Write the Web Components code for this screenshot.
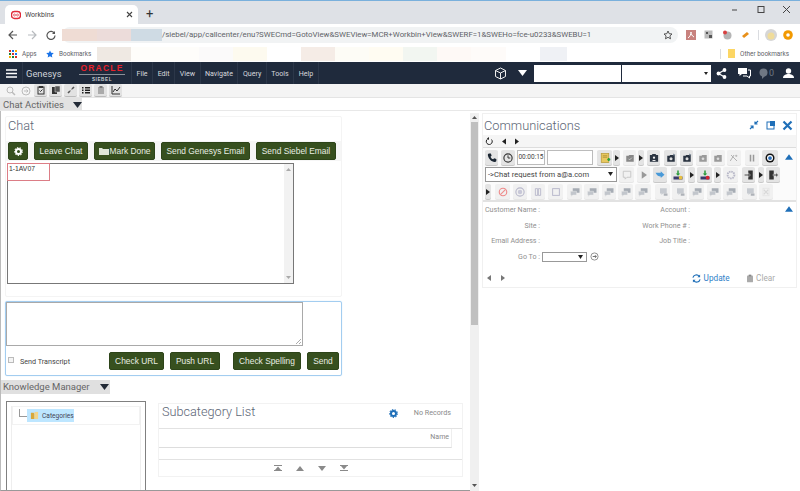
<!DOCTYPE html>
<html>
<head>
<meta charset="utf-8">
<title>Workbins</title>
<style>
  html, body { margin: 0; padding: 0; height: 100%; overflow: hidden; background: #fff; font-family: "Roboto", "Liberation Sans", sans-serif; }
  work-bins { display: flex; flex-direction: column; width: 800px; height: 491px; overflow: hidden; }
</style>
</head>
<body>
<work-bins></work-bins>
<script>
// tiny icon set, all drawn on a 16x16 box
const ICONS = {
  phone: '<path d="M4 2l2.5 0 1 3-1.5 1.2c.6 1.6 2 3 3.6 3.6L10.8 8.300l3 1v2.500c0 1-1 1.700-2 1.500C6.800 12.600 3.300 9 2.500 4.200 2.300 3 3 2 4 2z" fill="#1c2733"/>',
  clock: '<circle cx="8" cy="8" r="5.5" fill="none" stroke="#333" stroke-width="1.5"/><path d="M8 4.500V8h3" fill="none" stroke="#333" stroke-width="1.3"/>',
  note: '<rect x="3" y="2" width="10" height="12" fill="#e8c860" stroke="#b89a3a"/><path d="M5 5h6M5 7h6" stroke="#a88a30"/><path d="M11 10h4M13 8v4" stroke="#2fa03a" stroke-width="2"/>',
  tray: '<path d="M3 5h3l1-1h6v9H3z" fill="#888"/><path d="M6 9l1.5 1.5L10.5 7.5" stroke="#ddd" fill="none"/>',
  card: '<rect x="2.5" y="4" width="11" height="9" fill="#2a3340"/><circle cx="8" cy="7.5" r="1.5" fill="#eee"/><path d="M5.5 12c0-2 5-2 5 0" fill="#eee"/><path d="M5 4l1-1.5h4L11 4" fill="#2a3340"/>',
  folderx: '<path d="M3 5h3l1-1h6v9H3z" fill="#2a3340"/><circle cx="8" cy="9" r="2" fill="#ddd"/><path d="M11 2l3 2-3 1" fill="#6a7a8a"/>',
  folderg: '<path d="M3 5h3l1-1h6v9H3z" fill="#9a9a9a"/><circle cx="8" cy="9" r="1.8" fill="#ddd"/>',
  percent: '<path d="M4 4l8 8M3 12l5-8" stroke="#aaa" stroke-width="1.2" fill="none"/><circle cx="11" cy="5" r="1.5" fill="#bbb"/>',
  pause: '<path d="M5 3.500h2v9H5zM9 3.500h2v9H9z" fill="#999"/>',
  target: '<circle cx="8" cy="8" r="6" fill="#111"/><circle cx="8" cy="8" r="4" fill="#fff"/><circle cx="8" cy="8" r="2.5" fill="#2a6cb5"/>',
  chat: '<path d="M3 3h10v8H8l-2.500 2.500V11H3z" fill="none" stroke="#c4c4c4" stroke-width="1.2"/>',
  play: '<path d="M5 3l7 5-7 5z" fill="#999"/>',
  arrow: '<path d="M2 5h7V3l5 4.500-5 4.500v-2c-3 0-5-1-7-5z" fill="#4a9ad8"/>',
  accept: '<path d="M8 2v5" stroke="#2a9a3a" stroke-width="2"/><path d="M5 6h6L8 9z" fill="#2a9a3a"/><path d="M2 10h12v4H2z" fill="#3a3a6a"/><circle cx="11.5" cy="11.5" r="2.5" fill="#e8c040"/>',
  reject: '<path d="M8 2v5" stroke="#2a9a3a" stroke-width="2"/><path d="M5 6h6L8 9z" fill="#2a9a3a"/><path d="M2 10h12v4H2z" fill="#3a3a6a"/><circle cx="11.5" cy="11.5" r="2.5" fill="#d82030"/>',
  gearg: '<circle cx="8" cy="8" r="4.5" fill="none" stroke="#b8b8c8" stroke-width="2.5" stroke-dasharray="2 1"/>',
  door: '<path d="M7 2h6v12H7z" fill="#333"/><path d="M2 7h5V5l3 3-3 3V9H2z" fill="#555" stroke="#eee" stroke-width=".5"/>',
  doorout: '<path d="M3 2h6v12H3z" fill="#333"/><path d="M8 7h4V5l3 3-3 3V9H8z" fill="#555" stroke="#eee" stroke-width=".5"/>',
  ban: '<circle cx="8" cy="8" r="5" fill="none" stroke="#ee8a8a" stroke-width="1.5"/><path d="M4.500 11.500l7-7" stroke="#ee8a8a" stroke-width="1.5"/>',
  ring: '<circle cx="8" cy="8" r="5.5" fill="none" stroke="#b9b9cc" stroke-width="1.5"/><circle cx="8" cy="8" r="3" fill="#c8c8d8"/>',
  pauseb: '<path d="M4.500 3.500h3v9h-3zM8.500 3.500h3v9h-3z" fill="none" stroke="#b9b9cc" stroke-width="1.2"/>',
  stop: '<rect x="3.5" y="3.5" width="9" height="9" fill="none" stroke="#b9b9cc" stroke-width="1.3"/>',
  msgs: '<path d="M5 3h9v6H8l-2 2V9H5z" fill="#a6acb4"/><path d="M2 7h8v5H5l-2 2v-2H2z" fill="#c2c6cc" stroke="#eee" stroke-width=".6"/>',
  msgl: '<path d="M4 3h9v7H8l-2 2v-2H4z" fill="#c6cad0"/><path d="M9 10h5v3H9z" fill="#aeb2b8"/>',
  x: '<path d="M5 5l6 6M11 5l-6 6" stroke="#d8d8d8" stroke-width="1.5"/><rect x="4" y="3" width="8" height="10" fill="none" stroke="#e2e2e2"/>'
};
const svg = (name, size) => `<svg width="${size}" height="${size}" viewBox="0 0 16 16">${ICONS[name]}</svg>`;

class IconBtn extends HTMLElement {
  connectedCallback() {
    const w = this.getAttribute('w') || 16;
    const dis = this.hasAttribute('off');
    this.attachShadow({ mode: 'open' }).innerHTML = `
      <style>
        :host { display: block; flex: none; }
        div { width: ${w}px; height: 15px; display: flex; align-items: center; justify-content: center;
              border-radius: 2px; background: ${dis ? '#f1f1f1' : '#e4e4e4'}; box-shadow: 0 1px 0 ${dis ? '#e6e6e6' : '#c8c8c8'}; }
      </style>
      <div>${this.getAttribute('i') ? svg(this.getAttribute('i'), 12) : ''}<slot></slot></div>`;
  }
}
customElements.define('icon-btn', IconBtn);

class DarkBtn extends HTMLElement {
  constructor() {
    super();
    this.attachShadow({ mode: 'open' }).innerHTML = `
      <style>
        :host { display: flex; flex: none; align-items: center; justify-content: center; height: 18px; box-sizing: border-box;
                background: #37501f; color: #e9eee4; border: 1px solid #2d4419; border-radius: 2px;
                font: 8.4px "Liberation Sans", sans-serif; white-space: nowrap; }
      </style><slot></slot>`;
  }
}
customElements.define('dark-btn', DarkBtn);

class BrowserChrome extends HTMLElement {
  constructor() {
    super();
    this.attachShadow({ mode: 'open' }).innerHTML = `
      <style>
        :host { display: block; flex: none; font-family: "Roboto", "Liberation Sans", sans-serif; color: #5f6368; }
        .tabs { height: 23px; background: #dee1e6; border-top: 1px solid #79b0dc; display: flex; align-items: flex-end; padding-left: 5px; }
        .tab { width: 133px; height: 19px; box-sizing: border-box; background: #fff; border-radius: 5px 5px 0 0; display: flex; align-items: center; padding: 0 6px 0 6px; font-size: 7px; color: #444; }
        .tab span { flex: 1; margin-left: 4px; }
        .plus { font-size: 13px; color: #333; margin: 0 0 3px 8px; line-height: 14px; }
        .win { margin-left: auto; display: flex; align-items: center; gap: 17px; padding: 0 9px 6px 0; height: 17px; }
        .nav { height: 21px; background: #fff; display: flex; align-items: center; }
        .navbtns { width: 62px; display: flex; gap: 9px; padding-left: 8px; box-sizing: border-box; }
        .url { width: 616px; height: 16px; background: #f1f3f4; border-radius: 8px; display: flex; align-items: center; font-size: 7.83px; white-space: nowrap; position: relative; }
        .blur { display: flex; height: 12px; }
        .blur i { display: block; height: 12px; }
        .ext { display: flex; align-items: center; gap: 8px; margin-left: 8px; }
        .marks { height: 17px; background: #fff; display: flex; align-items: center; font-size: 6.4px; }
        .marks b { font-weight: normal; }
        .blocks { display: flex; height: 14px; margin-left: 6px; width: 623px; flex: none; }
        .blocks i { display: block; height: 14px; }
      </style>
      <div class="tabs">
        <div class="tab">
          <svg width="10" height="10" viewBox="0 0 10 10"><rect x=".5" y="1.5" width="9" height="7" rx="3" fill="none" stroke="#e02a3a" stroke-width="1.4"/><circle cx="3.5" cy="5" r="1" fill="none" stroke="#e02a3a" stroke-width=".7"/><circle cx="6.5" cy="5" r="1" fill="none" stroke="#e02a3a" stroke-width=".7"/></svg>
          <span>Workbins</span>
          <svg width="7" height="7" viewBox="0 0 7 7" style="margin-right:-1px"><path d="M1 1l5 5M6 1L1 6" stroke="#444" stroke-width="1.1"/></svg>
        </div>
        <div class="plus">+</div>
        <div class="win">
          <svg width="9" height="9" viewBox="0 0 9 9"><path d="M2 5h5" stroke="#444"/></svg>
          <svg width="9" height="9" viewBox="0 0 9 9"><rect x="2" y="1.5" width="6" height="6" fill="none" stroke="#444"/></svg>
          <svg width="9" height="9" viewBox="0 0 9 9"><path d="M1 1l7 7M8 1L1 8" stroke="#444"/></svg>
        </div>
      </div>
      <div class="nav">
        <div class="navbtns">
          <svg width="10" height="10" viewBox="0 0 10 10"><path d="M9 5H1.5M5 1L1 5l4 4" fill="none" stroke="#555" stroke-width="1.2"/></svg>
          <svg width="10" height="10" viewBox="0 0 10 10"><path d="M1 5h7.5M5 1l4 4-4 4" fill="none" stroke="#b8bbbf" stroke-width="1.2"/></svg>
          <svg width="10" height="10" viewBox="0 0 10 10"><path d="M8.5 3.5A4 4 0 1 0 9 5.5" fill="none" stroke="#555" stroke-width="1.2"/><path d="M9 1v3H6z" fill="#555"/></svg>
        </div>
        <div class="url">
          <div class="blur"><i style="width:35px;background:#efdcd4"></i><i style="width:34px;background:#ecdcda"></i><i style="width:31px;background:#cfdbe4"></i></div>
          <span>/siebel/app/callcenter/enu?SWECmd=GotoView&amp;SWEView=MCR+Workbin+View&amp;SWERF=1&amp;SWEHo=fce-u0233&amp;SWEBU=1</span>
          <svg style="position:absolute;right:5px;top:3px" width="10" height="10" viewBox="0 0 10 10"><path d="M5 1l1.200 2.700 2.800.3-2.100 1.900.6 2.900L5 7.300 2.500 8.800l.6-2.900L1 4l2.800-.3z" fill="none" stroke="#444" stroke-width=".9"/></svg>
        </div>
        <div class="ext">
          <svg width="10" height="10" viewBox="0 0 10 10"><rect width="10" height="10" fill="#c8827e"/><path d="M2 8c2-1 3-4 3-6 0 2 1 4 3 5" stroke="#fff" fill="none"/></svg>
          <svg width="10" height="10" viewBox="0 0 10 10"><rect x=".5" y=".5" width="8" height="8" fill="#bcbcbc"/><path d="M2 2h2v2H2zM5 5h3v3H5z" fill="#555"/></svg>
          <svg width="10" height="10" viewBox="0 0 10 10"><circle cx="5.5" cy="5.5" r="4" fill="#b5b5b5"/><circle cx="3" cy="2.5" r="2" fill="#d84040"/></svg>
          <svg width="10" height="10" viewBox="0 0 10 10"><path d="M2 6l5-4 2 2-5 4z" fill="#e8901a"/></svg>
          <i style="display:block;width:1px;height:10px;background:#dadce0"></i>
          <svg width="12" height="12" viewBox="0 0 12 12" style="margin-left:-2px"><circle cx="6" cy="6" r="6" fill="#d6d6d6"/><circle cx="6" cy="7" r="3.5" fill="#f0dc9a"/></svg>
          <svg width="10" height="10" viewBox="0 0 10 10" style="margin-left:-2px"><circle cx="5" cy="5" r="4.8" fill="#f29900"/><circle cx="5" cy="5" r="1.8" fill="#fff"/></svg>
        </div>
      </div>
      <div class="marks">
        <svg style="margin-left:9px" width="8" height="8" viewBox="0 0 8 8"><rect width="2" height="2" fill="#d93025"/><rect x="3" width="2" height="2" fill="#1a73e8"/><rect x="6" width="2" height="2" fill="#f9ab00"/><rect y="3" width="2" height="2" fill="#188038"/><rect x="3" y="3" width="2" height="2" fill="#d93025"/><rect x="6" y="3" width="2" height="2" fill="#1a73e8"/><rect y="6" width="2" height="2" fill="#f9ab00"/><rect x="3" y="6" width="2" height="2" fill="#188038"/><rect x="6" y="6" width="2" height="2" fill="#d93025"/></svg>
        <b style="margin-left:5px;width:14px">Apps</b>
        <svg style="margin-left:10px" width="8" height="8" viewBox="0 0 10 10"><path d="M5 .5l1.400 3 3.300.4-2.400 2.200.6 3.300L5 7.800 2.100 9.400l.6-3.300L.3 3.900l3.300-.4z" fill="#1a73e8"/></svg>
        <b style="margin-left:5px;width:32px">Bookmarks</b>
        <div class="blocks">
          <i style="width:34px;background:#efe9e3"></i><i style="width:68px;background:#fefdfa"></i><i style="width:34px;background:#fbfafa"></i><i style="width:34px;background:#fdfaef"></i><i style="width:34px"></i><i style="width:34px;background:#f5ece6"></i><i style="width:34px;background:#fdfcf6"></i><i style="width:34px;background:#fffcf2"></i><i style="width:34px;background:#f2f6f1"></i><i style="width:34px;background:#fef9f6"></i><i style="width:35px;background:#fefbf9"></i><i style="width:34px"></i><i style="width:27px;background:#eff1f5"></i>
        </div>
        <i style="display:block;width:1px;height:10px;background:#dadce0"></i>
        <svg style="margin-left:7px" width="7" height="9" viewBox="0 0 7 9"><path d="M0 0h7v9H0z" fill="#fcd664"/></svg>
        <b style="margin-left:5px;white-space:nowrap">Other bookmarks</b>
      </div>`;
  }
}
customElements.define('browser-chrome', BrowserChrome);

class SiebelHeader extends HTMLElement {
  constructor() {
    super();
    this.attachShadow({ mode: 'open' }).innerHTML = `
      <style>
        :host { display: flex; flex: none; height: 22px; background: #1f2a3c; color: #d5d8dd; align-items: stretch; font: 7.1px "Roboto", "Liberation Sans", sans-serif; }
        .cell { display: flex; align-items: center; box-sizing: border-box; border-right: 1px solid #2c3749; }
        .burger { width: 23px; justify-content: center; }
        .genesys { width: 109px; padding-left: 3px; font-size: 9.4px; position: relative; color: #cfd3d9; }
        .logo { position: absolute; left: 56px; top: 2px; width: 46px; text-align: center; }
        .logo b { display: block; font: bold 8.5px/8px "Liberation Sans", sans-serif; letter-spacing: 1.2px; color: #e8212b; border-bottom: 1px solid #8a8f98; padding-bottom: 2px; }
        .logo span { display: block; font: bold 4.6px/10px "Liberation Sans", sans-serif; letter-spacing: .6px; color: #c8ccd2; }
        .menu { padding: 0 4.5px; }
        .spacer { flex: 1; }
        .box { height: 17px; align-self: center; background: #fff; flex: none; position: relative; }
        .right { display: flex; align-items: center; }
      </style>
      <div class="cell burger"><svg width="11" height="9" viewBox="0 0 11 9"><path d="M0 1h11M0 4.500h11M0 8h11" stroke="#fff" stroke-width="1.5"/></svg></div>
      <div class="cell genesys">Genesys<div class="logo"><b>ORACLE</b><span>SIEBEL</span></div></div>
      <div class="cell menu">File</div><div class="cell menu">Edit</div><div class="cell menu">View</div><div class="cell menu">Navigate</div><div class="cell menu">Query</div><div class="cell menu">Tools</div><div class="cell menu">Help</div>
      <div class="spacer"></div>
      <div class="right">
        <svg width="13" height="13" viewBox="0 0 13 13" style="margin-right:11px"><path d="M6.500 1l5 2.500v6l-5 2.500-5-2.500v-6zM1.500 3.500l5 2.500 5-2.500M6.500 6v6" fill="none" stroke="#eee"/></svg>
        <svg width="9" height="6" viewBox="0 0 9 6" style="margin-right:7px"><path d="M0 0h9L4.500 6z" fill="#fff"/></svg>
        <div class="box" style="width:87px;margin-right:1px"></div>
        <div class="box" style="width:89px"><svg style="position:absolute;right:3px;top:7px" width="4" height="3" viewBox="0 0 4 3"><path d="M0 0h4L2 3z" fill="#222"/></svg></div>
        <svg width="11" height="11" viewBox="0 0 11 11" style="margin-left:5px"><path d="M8.500 2L2.500 5.500l6 3.500" fill="none" stroke="#fff" stroke-width="1.2"/><circle cx="8.5" cy="2" r="1.9" fill="#fff"/><circle cx="2.5" cy="5.5" r="1.9" fill="#fff"/><circle cx="8.5" cy="9" r="1.9" fill="#fff"/></svg>
        <svg width="14" height="12" viewBox="0 0 14 12" style="margin-left:10px"><path d="M1 1h9v6H5L2.500 9V7H1z" fill="#fff"/><path d="M11 3h2.500v6h-1v2L10 9H6" fill="none" stroke="#fff"/></svg>
        <svg width="9" height="11" viewBox="0 0 9 11" style="margin-left:8px"><ellipse cx="4.5" cy="4.5" rx="4" ry="4" fill="#6f7783"/><path d="M3 8l0 3 3-3z" fill="#6f7783"/></svg>
        <span style="font-size:9px;color:#6f7783;margin-left:1px">0</span>
        <svg width="11" height="10" viewBox="0 0 11 10" style="margin:0 6px 0 9px"><circle cx="5.5" cy="3" r="2.7" fill="#fff"/><path d="M0 10c0-3 3-4 5.500-4s5.500 1 5.500 4z" fill="#fff"/></svg>
      </div>`;
  }
}
customElements.define('siebel-header', SiebelHeader);

class ViewBar extends HTMLElement {
  constructor() {
    super();
    const btn = (d, off) => `<span class="b${off ? ' off' : ''}"><svg width="10" height="10" viewBox="0 0 10 10">${d}</svg></span>`;
    this.attachShadow({ mode: 'open' }).innerHTML = `
      <style>
        :host { display: block; flex: none; font-family: "Roboto", "Liberation Sans", sans-serif; }
        .tools { height: 14px; background: #f4f4f4; border-bottom: 1px solid #e4e4e4; display: flex; align-items: flex-start; padding-left: 4px; gap: 2px; box-sizing: border-box; }
        .b { width: 13px; height: 13px; display: flex; align-items: center; justify-content: center; background: #e2e2e2; border-bottom: 1px solid #bbb; border-radius: 2px; box-sizing: border-box; flex: none; }
        .b.off { background: none; border: 0; }
        .tabs { height: 13px; display: flex; border-bottom: 1px solid #e8e8e8; box-sizing: border-box; }
        .tab { width: 82px; background: #e2e2e2; color: #666; font-size: 9.5px; line-height: 14px; padding-left: 3px; box-sizing: border-box; position: relative; white-space: nowrap; }
        .tab svg { position: absolute; right: 0; top: 4px; }
      </style>
      <div class="tools">
        ${btn('<circle cx="4" cy="4" r="3" fill="none" stroke="#bbb"/><path d="M6 6l3 3" stroke="#bbb" stroke-width="1.5"/>', 1)}
        ${btn('<circle cx="5" cy="5" r="4" fill="none" stroke="#bbb"/><path d="M3 5h4M5.500 3.500L7 5 5.500 6.500" fill="none" stroke="#bbb"/>', 1)}
        ${btn('<rect x="2" y="2" width="6" height="7" fill="none" stroke="#333"/><path d="M3 1h4v2H3z" fill="#333"/><path d="M3.500 5.500l1 1 2-2" fill="none" stroke="#333"/>')}
        ${btn('<path d="M1 2h5v7H1z" fill="#333"/><path d="M4 1h5v6H4z" fill="#555" stroke="#e2e2e2" stroke-width=".5"/>')}
        ${btn('<path d="M2 8l2-2M6 4l2-2" stroke="#555" stroke-width="1.6"/><path d="M4 6l2-2" stroke="#aaa"/>')}
        ${btn('<path d="M1 2h1.500v1.500H1zM4 2h5v1.500H4zM1 4.500h1.500V6H1zM4 4.500h5V6H4zM1 7h1.500v1.500H1zM4 7h5v1.500H4z" fill="#222"/>')}
        ${btn('<rect x="2" y="2" width="6" height="7" fill="#aaa"/><rect x="3.5" y="1" width="3" height="2" fill="#777"/>')}
        ${btn('<path d="M1 1v8h8" fill="none" stroke="#333"/><path d="M2 7l2-3 2 2 3-4" fill="none" stroke="#333"/>')}
      </div>
      <div class="tabs">
        <div class="tab">Chat Activities<svg width="9" height="6" viewBox="0 0 9 6"><path d="M0 0h9L4.500 6z" fill="#222a36"/></svg></div>
      </div>`;
  }
}
customElements.define('view-bar', ViewBar);

class ChatApplet extends HTMLElement {
  constructor() {
    super();
    this.attachShadow({ mode: 'open' }).innerHTML = `
      <style>
        :host { display: block; font-family: "Roboto", "Liberation Sans", sans-serif; }
        .card { width: 337px; height: 181px; margin: 5px 0 0 5px; box-sizing: border-box; border: 1px solid #f4f4f4; border-radius: 2px; }
        .title { height: 24px; padding: 1px 0 0 2px; font-size: 12.7px; font-weight: 300; color: #5c6675; box-sizing: border-box; }
        .row { display: flex; background: #f6f6f6; height: 20px; align-items: center; padding-left: 2px; gap: 6px; }
        .log { width: 287px; height: 121px; margin: 2px 0 0 1px; box-sizing: border-box; border: 1px solid #777; position: relative; font: 6.8px "Liberation Sans", sans-serif; color: #333; }
        .log .sel { position: absolute; left: -1px; top: -1px; width: 43px; height: 18px; border: 1px solid #dc7d86; box-sizing: border-box; padding: 1px 0 0 1px; }
        .log .bar { position: absolute; right: 0; top: 0; bottom: 0; width: 9px; background: #f2f2f2; }
        .bar svg { position: absolute; left: 2px; }
        .input { width: 337px; height: 75px; margin: 4px 0 0 5px; box-sizing: border-box; border: 1px solid #a3cdf0; border-radius: 2px; box-shadow: 0 0 1px #a9d3f5; }
        .ta { width: 297px; height: 44px; box-sizing: border-box; border: 1px solid #a9a9a9; position: relative; }
        .ta svg { position: absolute; right: 0; bottom: 0; }
        .foot { display: flex; align-items: center; height: 18px; margin-top: 6px; font-size: 7.2px; color: #444; }
        .foot i { display: block; width: 6px; height: 6px; box-sizing: border-box; border: 1px solid #bbb; background: #f4f4f4; margin: -3px 6px 0 2px; flex: none; }
        .foot span { width: 84px; flex: none; white-space: nowrap; }
      </style>
      <div class="card">
        <div class="title">Chat</div>
        <div class="row">
          <dark-btn style="width:20px"><svg width="9" height="9" viewBox="0 0 10 10"><circle cx="5" cy="5" r="2.8" fill="none" stroke="#fff" stroke-width="2.2"/><circle cx="5" cy="5" r="4.3" fill="none" stroke="#fff" stroke-width="1.2" stroke-dasharray="1.5 1.5"/></svg></dark-btn>
          <dark-btn style="width:54px">Leave Chat</dark-btn>
          <dark-btn style="width:61px"><svg width="10" height="8" viewBox="0 0 10 8" style="margin-right:1px"><path d="M0 1h3l1 1h6v6H0z" fill="#dfe5d8"/></svg>Mark Done</dark-btn>
          <dark-btn style="width:89px">Send Genesys Email</dark-btn>
          <dark-btn style="width:80px">Send Siebel Email</dark-btn>
        </div>
        <div class="log"><div class="sel">1-1AV07</div><div class="bar"><svg style="top:4px" width="5" height="3" viewBox="0 0 5 3"><path d="M0 3h5L2.500 0z" fill="#aaa"/></svg><svg style="bottom:4px" width="5" height="3" viewBox="0 0 5 3"><path d="M0 0h5L2.500 3z" fill="#aaa"/></svg></div></div>
      </div>
      <div class="input">
        <div class="ta"><svg width="7" height="7" viewBox="0 0 7 7"><path d="M1 6l5-5M4 6l2-2" stroke="#888" stroke-width=".7"/></svg></div>
        <div class="foot">
          <i></i><span>Send Transcript</span>
          <dark-btn style="width:55px;margin-left:5px">Check URL</dark-btn>
          <dark-btn style="width:50px;margin-left:6px">Push URL</dark-btn>
          <dark-btn style="width:68px;margin-left:13px">Check Spelling</dark-btn>
          <dark-btn style="width:32px;margin-left:6px">Send</dark-btn>
        </div>
      </div>`;
  }
}
customElements.define('chat-applet', ChatApplet);

class KnowledgeApplet extends HTMLElement {
  constructor() {
    super();
    const tri = (d) => `<svg width="8" height="6" viewBox="0 0 8 6">${d}</svg>`;
    this.attachShadow({ mode: 'open' }).innerHTML = `
      <style>
        :host { display: block; font-family: "Roboto", "Liberation Sans", sans-serif; color: #666; }
        .tab { width: 109px; height: 14px; margin: 4px 0 0 1px; background: #e0e0e0; font-size: 9.5px; line-height: 13px; padding-left: 2px; box-sizing: border-box; position: relative; color: #666; white-space: nowrap; }
        .tab svg { position: absolute; right: 1px; top: 4px; }
        .body { display: flex; margin: 7px 0 0 6px; gap: 12px; height: 91px; align-items: flex-start; }
        .tree { width: 140px; height: 91px; box-sizing: border-box; border: 1px solid #808080; border-bottom: 0; padding: 4px 4px 0; }
        .inner { height: 100%; border: solid #eee; border-width: 0 1px; }
        .node { height: 19px; border: 1px solid #f2f2f2; display: flex; align-items: center; padding-left: 2px; box-sizing: border-box; }
        .node .el { width: 7px; height: 7px; border: solid #999; border-width: 0 0 1px 1px; margin: -6px 0 0 4px; flex: none; }
        .node .cat { display: flex; align-items: center; gap: 3px; background: #bde6ff; height: 13px; width: 47px; font-size: 6.6px; color: #445; padding-left: 3px; box-sizing: border-box; white-space: nowrap; }
        .sub { width: 305px; margin-top: 2px; height: 74px; box-sizing: border-box; border: 1px solid #f2f2f2; display: flex; flex-direction: column; }
        .top { height: 25px; border-bottom: 1px solid #e2e2e2; display: flex; align-items: flex-start; padding: 0 0 0 3px; box-sizing: border-box; font-size: 12.7px; font-weight: 300; color: #5c6675; }
        .top span { flex: 1; }
        .top svg { margin: 5px 16px 0 0; }
        .top em { font-style: normal; font-weight: 400; font-size: 7.2px; color: #8a8a8a; margin: 4px 11px 0 0; }
        .head { height: 19px; width: 293px; box-sizing: border-box; border-bottom: 1px solid #ddd; border-right: 1px solid #eee; text-align: right; font-size: 7px; line-height: 17px; color: #888; padding-right: 2px; }
        .blank { height: 11px; border-bottom: 1px solid #e2e2e2; }
        .pager { flex: 1; display: flex; align-items: center; padding-left: 115px; gap: 14px; }
      </style>
      <div class="tab">Knowledge Manager<svg width="9" height="6" viewBox="0 0 9 6"><path d="M0 0h9L4.500 6z" fill="#222a36"/></svg></div>
      <div class="body">
        <div class="tree">
          <div class="inner">
            <div class="node"><div class="el"></div><div class="cat"><svg width="9" height="9" viewBox="0 0 10 10"><path d="M1 2h3l1 1v6H1z" fill="#d8a83a"/><path d="M5 1h4v8H5z" fill="#f3d58a"/></svg>Categories</div></div>
          </div>
        </div>
        <div class="sub">
          <div class="top"><span>Subcategory List</span>
            <svg width="9" height="9" viewBox="0 0 10 10"><circle cx="5" cy="5" r="2.8" fill="none" stroke="#1f6fb8" stroke-width="2.2"/><circle cx="5" cy="5" r="4.3" fill="none" stroke="#1f6fb8" stroke-width="1.2" stroke-dasharray="1.5 1.5"/></svg>
            <em>No Records</em>
          </div>
          <div class="head">Name</div>
          <div class="blank"></div>
          <div class="pager">
            ${tri('<path d="M0 0h8v1H0zM4 1.500L7 5H1zM0 5h8v1H0z" fill="#8a8a8a"/>')}
            ${tri('<path d="M4 1l4 5H0z" fill="#8a8a8a"/>')}
            ${tri('<path d="M0 1h8L4 6z" fill="#8a8a8a"/>')}
            ${tri('<path d="M0 0h8v1H0zM4 4.500L1 1h6zM0 5h8v1H0z" fill="#8a8a8a"/>')}
          </div>
        </div>
      </div>`;
  }
}
customElements.define('knowledge-applet', KnowledgeApplet);

class CommPanel extends HTMLElement {
  constructor() {
    super();
    const ib = (i, w, off, ml) => `<icon-btn i="${i}" w="${w}"${off ? ' off' : ''} style="margin-left:${ml}px"></icon-btn>`;
    const caret = (ml, w = 6) => `<icon-btn w="${w}" style="margin-left:${ml}px"><svg width="4" height="6" viewBox="0 0 4 6"><path d="M0 0l4 3-4 3z" fill="#222"/></svg></icon-btn>`;
    this.attachShadow({ mode: 'open' }).innerHTML = `
      <style>
        :host { display: block; font-family: "Roboto", "Liberation Sans", sans-serif; }
        .card { margin: 2px 3px 0 2px; height: 175px; box-sizing: border-box; border: 1px solid #f0f0f0; }
        .title { height: 21px; display: flex; align-items: center; padding: 1px 3px 0 1px; font-size: 12.8px; font-weight: 300; color: #5c6675; box-sizing: border-box; }
        .title span { flex: 1; }
        .nav { height: 13px; background: #f5f5f5; display: flex; align-items: center; gap: 8px; padding-left: 2px; border-bottom: 1px solid #ddd; box-sizing: border-box; }
        .bars { height: 54px; border-bottom: 2px solid #e2e2e2; box-sizing: border-box; padding-top: 2px; background: #fbfbfb; }
        .r { display: flex; align-items: center; height: 15px; margin-bottom: 2px; padding-left: 2px; position: relative; }
        .time { width: 28px; height: 15px; border: 1px solid #bbb; box-sizing: border-box; font-size: 6.5px; color: #444; line-height: 13px; text-align: center; margin-left: 2px; background: #fff; flex: none; white-space: nowrap; }
        .field { width: 46px; height: 15px; border: 1px solid #bbb; box-sizing: border-box; margin-left: 2px; background: #fff; flex: none; }
        .select { width: 132px; height: 15px; border: 1px solid #999; box-sizing: border-box; font-size: 7.6px; color: #444; line-height: 13px; padding-left: 2px; background: #fff; position: relative; white-space: nowrap; flex: none; }
        .select svg { position: absolute; right: 3px; top: 4px; }
        .up { position: absolute; right: 3px; top: 4px; }
        .fields { display: grid; grid-template-columns: 57px 94px 56px 1fr; grid-auto-rows: 15.5px; font-size: 7.1px; color: #909090; padding-top: 3px; position: relative; }
        .fields label { white-space: nowrap; justify-self: end; }
        .fields label.far { grid-column: 3; }
        .goto { display: flex; align-items: center; grid-column: 2 / 5; margin-left: 2px; align-self: start; }
        .goto i { display: block; width: 45px; height: 10px; border: 1px solid #999; box-sizing: border-box; position: relative; }
        .goto i svg { position: absolute; right: 3px; top: 2px; }
        .foot { display: flex; align-items: center; padding: 6px 21px 0 4px; font-size: 8.2px; color: #aaa; }
        .foot .sp { flex: 1; }
        .update { color: #2f7fc8; display: flex; align-items: center; gap: 2.5px; }
        .clear { display: flex; align-items: center; gap: 3.5px; margin-left: 17px; }
      </style>
      <div class="card">
        <div class="title"><span>Communications</span>
          <svg width="10" height="10" viewBox="0 0 10 10"><path d="M9 1L6 4M1 9l3-3M6 1.500V4h2.500M4 8.500V6H1.500" fill="none" stroke="#1f6fb8" stroke-width="1.2"/></svg>
          <svg width="10" height="10" viewBox="0 0 10 10" style="margin-left:7px"><rect x="1" y="2" width="7" height="7" fill="none" stroke="#1f6fb8"/><rect x="4" y="1" width="5" height="5" fill="#1f6fb8"/></svg>
          <svg width="11" height="11" viewBox="0 0 11 11" style="margin-left:6px"><path d="M1.500 1.500l8 8M9.500 1.500l-8 8" stroke="#1f6fb8" stroke-width="2.2"/></svg>
        </div>
        <div class="nav">
          <svg width="8" height="8" viewBox="0 0 8 8"><path d="M6.500 2.500a3 3 0 1 1-2.500-1" fill="none" stroke="#222"/><path d="M4 0v3L2 1.500z" fill="#222"/></svg>
          <svg width="4" height="7" viewBox="0 0 4 6" style="margin-left:1px"><path d="M4 0L0 3l4 3z" fill="#222"/></svg>
          <svg width="4" height="7" viewBox="0 0 4 6" style="margin-left:1px"><path d="M0 0l4 3-4 3z" fill="#222"/></svg>
        </div>
        <div class="bars">
          <div class="r">
            ${ib('phone',13,0,0)}${ib('clock',14,0,3)}
            <div class="time">00:00:15</div><div class="field"></div>
            ${ib('note',15,0,4)}${caret(1,7)}${ib('tray',13,1,3)}${caret(2)}${ib('card',13,0,3)}
            ${ib('folderx',13,0,4)}${ib('folderx',13,0,3)}${ib('folderg',13,1,3)}${ib('folderg',14,1,2)}${ib('percent',14,1,2)}${ib('pause',14,1,4)}${ib('target',16,0,3)}
            <svg class="up" width="8" height="6" viewBox="0 0 9 6"><path d="M0 6h9L4.500 0z" fill="#1f6fb8"/></svg>
          </div>
          <div class="r">
            <div class="select">-&gt;Chat request from a@a.com<svg width="5" height="4" viewBox="0 0 5 4"><path d="M0 0h5L2.500 4z" fill="#222"/></svg></div>
            ${ib('chat',15,1,2)}${ib('play',13,1,3)}${ib('arrow',14,0,3)}${ib('accept',14,0,4)}${caret(3,7)}${ib('reject',15,0,2)}${caret(2,7)}${ib('gearg',15,1,2)}${ib('door',13,0,4)}${caret(3)}${ib('doorout',14,0,2)}
          </div>
          <div class="r">
            ${caret(0)}${ib('ban',15,1,4)}${ib('ring',14,1,3)}${ib('pauseb',14,1,4)}${ib('stop',15,1,3)}
            ${ib('msgs',15,1,4)}${ib('msgs',15,1,2)}${ib('msgs',14,1,3)}${ib('msgs',15,1,2)}${ib('msgs',16,1,2)}${ib('msgl',15,1,4)}${ib('msgl',15,1,2)}${ib('msgs',15,1,2)}${ib('msgs',14,1,3)}${ib('msgs',15,1,2)}${ib('msgl',15,1,4)}${ib('x',14,1,2)}
          </div>
        </div>
        <div class="fields">
          <label>Customer Name :</label><span></span><label class="far">Account :</label><span></span>
          <label>Site :</label><span></span><label class="far">Work Phone # :</label><span></span>
          <label>Email Address :</label><span></span><label class="far">Job Title :</label><span></span>
          <label>Go To :</label>
          <div class="goto"><i><svg width="5" height="4" viewBox="0 0 5 4"><path d="M0 0h5L2.500 4z" fill="#222"/></svg></i>
            <svg width="9" height="9" viewBox="0 0 10 10" style="margin-left:3px"><circle cx="5" cy="5" r="4" fill="none" stroke="#888"/><path d="M3 5h4M5.500 3.500L7 5 5.500 6.500" fill="none" stroke="#666"/></svg></div>
          <svg class="up" width="8" height="6" viewBox="0 0 9 6"><path d="M0 6h9L4.500 0z" fill="#1f6fb8"/></svg>
        </div>
        <div class="foot">
          <svg width="4" height="6" viewBox="0 0 4 6"><path d="M4 0L0 3l4 3z" fill="#777"/></svg>
          <svg width="4" height="6" viewBox="0 0 4 6" style="margin-left:10px"><path d="M0 0l4 3-4 3z" fill="#777"/></svg>
          <span class="sp"></span>
          <span class="update"><svg width="9" height="9" viewBox="0 0 10 10"><path d="M1 4a4 4 0 0 1 7-1.500M9 6a4 4 0 0 1-7 1.500" fill="none" stroke="#1f6fb8" stroke-width="1.3"/><path d="M9 .500v3H6zM1 9.500v-3h3z" fill="#1f6fb8"/></svg>Update</span>
          <span class="clear"><svg width="6" height="9" viewBox="0 0 7 9"><rect y="1" width="7" height="8" rx="1" fill="#aaa"/><rect x="2" width="3" height="2" fill="#888"/></svg>Clear</span>
        </div>
      </div>`;
  }
}
customElements.define('comm-panel', CommPanel);

class WorkBins extends HTMLElement {
  constructor() {
    super();
    this.attachShadow({ mode: 'open' }).innerHTML = `
      <style>
        :host { display: flex; flex-direction: column; width: 800px; height: 491px; overflow: hidden; background: #fff; }
        .split { flex: 1; min-height: 0; display: flex; }
        .left { width: 470px; flex: none; box-sizing: border-box; border-left: 1px solid #bbb; border-bottom: 1px solid #999; overflow: hidden; }
        .left > * { margin-left: -1px; }
        .scroll { width: 9px; flex: none; margin-top: 2px; background: #f0f0f0; position: relative; }
        .thumb { height: 203px; margin: 9px 1px 0; background: #c0c0c0; }
        .scroll svg { position: absolute; left: 2px; }
        .right { flex: 1; min-width: 0; margin-left: 1px; }
      </style>
      <browser-chrome></browser-chrome>
      <siebel-header></siebel-header>
      <view-bar></view-bar>
      <div class="split">
        <div class="left"><chat-applet></chat-applet><knowledge-applet></knowledge-applet></div>
        <div class="scroll">
          <svg style="top:3px" width="5" height="3" viewBox="0 0 5 3"><path d="M0 3h5L2.500 0z" fill="#555"/></svg>
          <div class="thumb"></div>
          <svg style="bottom:4px" width="5" height="3" viewBox="0 0 5 3"><path d="M0 0h5L2.500 3z" fill="#555"/></svg>
        </div>
        <div class="right"><comm-panel></comm-panel></div>
      </div>`;
  }
}
customElements.define('work-bins', WorkBins);
</script>
</body>
</html>
